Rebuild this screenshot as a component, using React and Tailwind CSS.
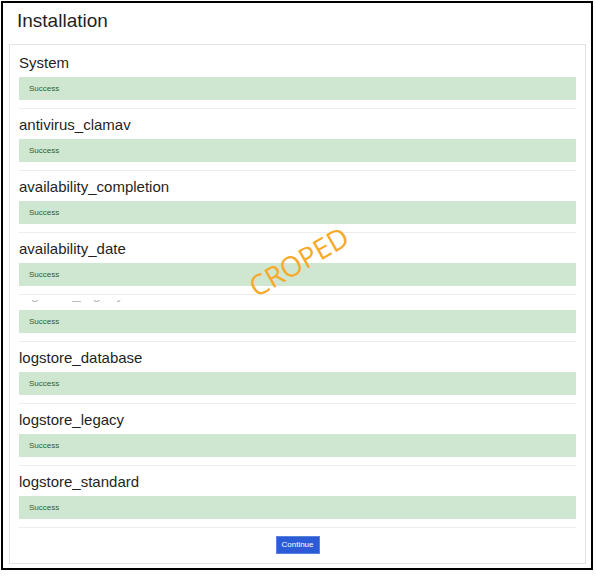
import React from 'react'

const ResultRow = ({ title }) => (
    <div className="pt-[7px] pb-[8px] border-b border-[#ececec]">
        <div className="h-[18px] leading-[18px] text-[15px] text-[#1f1f1f]">{title}</div>
        <div className="mt-[5px] h-[23px] bg-[#cfe6d1] flex items-center pl-[10px] text-[8px] text-[#2d5e31]">Success</div>
    </div>
)

const App = () => {

    const before = ['antivirus_clamav', 'availability_completion', 'availability_date'];
    const after = ['logstore_database', 'logstore_legacy', 'logstore_standard'];

    return (
        <div className="relative w-[596px] h-[576px] bg-white font-['Liberation_Sans',Arial,sans-serif]">
            <div className="ml-[1px] mt-[1px] w-[592px] h-[569px] border-2 border-black flex flex-col">
                {/* HEADER */}
                <div className="h-[41px] pt-[6px] pl-[14px]">
                    <h1 className="text-[19px] leading-[24px] text-[#1f1f1f]">Installation</h1>
                </div>

                {/* PANEL */}
                <div className="ml-[6px] mr-[5px] border border-[#e3e3e3] px-[9px] pt-[2px] pb-[9px]">

                    <ResultRow title="System" />
                    {before.map((t) => <ResultRow key={t} title={t} />)}

                    {/* cropped row: only the very bottom of the title survives */}
                    <div className="pt-[5px] pb-[8px] border-b border-[#ececec]">
                        <div className="h-[3px] overflow-hidden">
                            <div className="-mt-[15px] h-[18px] leading-[18px] text-[15px] text-[#bbb]">logstore_legacy</div>
                        </div>
                        <div className="mt-[7px] h-[23px] bg-[#cfe6d1] flex items-center pl-[10px] text-[8px] text-[#2d5e31]">Success</div>
                    </div>

                    {after.map((t) => <ResultRow key={t} title={t} />)}

                    <div className="flex justify-center pt-[8px]">
                        <button className="h-[18px] w-[44px] bg-[#2b5bd6] border border-[#5a82df] text-white text-[8px] leading-none">Continue</button>
                    </div>
                </div>
            </div>

            {/* WATERMARK */}
            <div className="absolute left-[243px] top-[246px] w-[111px] text-center leading-none text-[28px] text-[#f7a928] font-['Open_Sans',sans-serif] -rotate-[30deg] pointer-events-none">CROPED</div>
        </div>
    )
}

export default App
